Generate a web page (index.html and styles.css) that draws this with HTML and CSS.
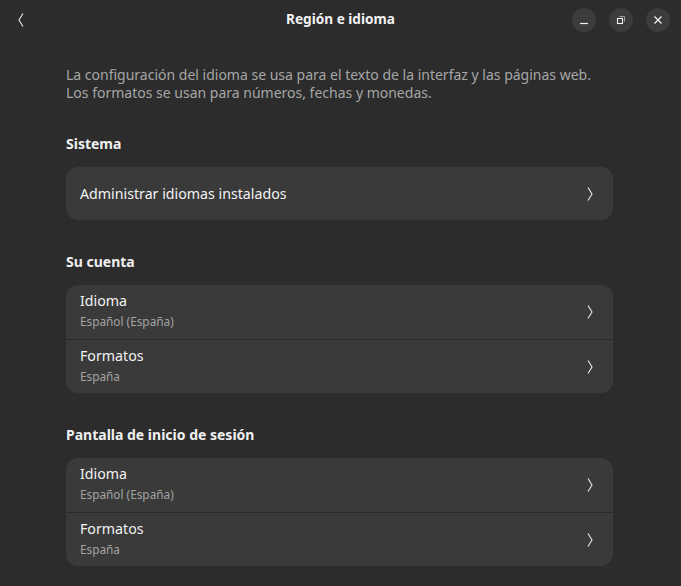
FILE: index.html
```html
<!DOCTYPE html>
<html lang="es">
<head>
<meta charset="utf-8">
<title>Región e idioma</title>
<link rel="stylesheet" href="styles.css">
</head>
<body>
<div class="window">
  <header class="headerbar">
    <div class="start">
      <button class="back" aria-label="Atrás">
        <svg width="10" height="16" viewBox="0 0 10 16"><path d="M7 1.5 L3 8 L7 14.5" fill="none" stroke="#e8e8e8" stroke-width="1.1"/></svg>
      </button>
    </div>
    <h1 class="title">Región e idioma</h1>
    <div class="controls">
      <span class="wbtn"><svg width="12" height="12" viewBox="0 0 12 12"><path d="M2 9.5 H10" stroke="#f0f0f0" stroke-width="1.2"/></svg></span>
      <span class="wbtn"><svg width="12" height="12" viewBox="0 0 12 12"><rect x="2.5" y="4.5" width="5" height="5" fill="none" stroke="#f0f0f0" stroke-width="1.1"/><path d="M4.5 2.5 H9.5 V7.5" fill="none" stroke="#a0a0a0" stroke-width="1"/></svg></span>
      <span class="wbtn"><svg width="12" height="12" viewBox="0 0 12 12"><path d="M2.5 2.5 L9.5 9.5 M9.5 2.5 L2.5 9.5" stroke="#f0f0f0" stroke-width="1.3"/></svg></span>
    </div>
  </header>
  <main class="content">
    <p class="desc">La configuración del idioma se usa para el texto de la interfaz y las páginas web.<br>Los formatos se usan para números, fechas y monedas.</p>

    <h2 class="section">Sistema</h2>
    <div class="card">
      <div class="row single">
        <span class="row-title">Administrar idiomas instalados</span>
        <svg class="chev" width="8" height="16" viewBox="0 0 8 16"><path d="M2 1.5 L6 8 L2 14.5" fill="none" stroke="#e8e8e8" stroke-width="1.1"/></svg>
      </div>
    </div>

    <h2 class="section">Su cuenta</h2>
    <div class="card">
      <div class="row">
        <div class="row-text"><span class="row-title">Idioma</span><span class="row-sub">Español (España)</span></div>
        <svg class="chev" width="8" height="16" viewBox="0 0 8 16"><path d="M2 1.5 L6 8 L2 14.5" fill="none" stroke="#e8e8e8" stroke-width="1.1"/></svg>
      </div>
      <div class="row">
        <div class="row-text"><span class="row-title">Formatos</span><span class="row-sub">España</span></div>
        <svg class="chev" width="8" height="16" viewBox="0 0 8 16"><path d="M2 1.5 L6 8 L2 14.5" fill="none" stroke="#e8e8e8" stroke-width="1.1"/></svg>
      </div>
    </div>

    <h2 class="section">Pantalla de inicio de sesión</h2>
    <div class="card">
      <div class="row">
        <div class="row-text"><span class="row-title">Idioma</span><span class="row-sub">Español (España)</span></div>
        <svg class="chev" width="8" height="16" viewBox="0 0 8 16"><path d="M2 1.5 L6 8 L2 14.5" fill="none" stroke="#e8e8e8" stroke-width="1.1"/></svg>
      </div>
      <div class="row">
        <div class="row-text"><span class="row-title">Formatos</span><span class="row-sub">España</span></div>
        <svg class="chev" width="8" height="16" viewBox="0 0 8 16"><path d="M2 1.5 L6 8 L2 14.5" fill="none" stroke="#e8e8e8" stroke-width="1.1"/></svg>
      </div>
    </div>
  </main>
</div>
</body>
</html>
```

FILE: styles.css
```css
* { box-sizing: border-box; }
html, body {
  margin: 0;
  padding: 0;
  background: #2c2c2c;
  color: #ffffff;
  font-family: "Noto Sans", "Open Sans", sans-serif;
}
.window {
  width: 681px;
  height: 586px;
  overflow: hidden;
  background: #2c2c2c;
}
.headerbar {
  height: 40px;
  display: grid;
  grid-template-columns: 1fr auto 1fr;
  align-items: center;
  padding: 0 11px 0 14px;
}
.start { display: flex; align-items: center; }
.back {
  background: none;
  border: none;
  padding: 0;
  width: 14px;
  height: 20px;
  display: flex;
  align-items: center;
  justify-content: center;
}
.title {
  margin: 0;
  text-align: center;
  font-size: 13.6px;
  line-height: 18px;
  font-weight: 700;
  color: #f2f2f2;
  padding-bottom: 2px;
  padding-right: 3px;
}
.controls {
  display: flex;
  gap: 13px;
  justify-content: flex-end;
}
.wbtn {
  width: 24px;
  height: 24px;
  border-radius: 50%;
  background: #3c3c3c;
  display: flex;
  align-items: center;
  justify-content: center;
}
.content {
  width: 547px;
  margin-left: 66px;
  padding-top: 26px;
}
.desc {
  margin: 0;
  font-size: 14px;
  line-height: 18px;
  color: #a6a6a6;
}
.section {
  margin: 33px 0 14px;
  font-size: 14px;
  line-height: 18px;
  font-weight: 700;
  color: #f0f0f0;
}
.card {
  background: #3a3a3a;
  border-radius: 12px;
  overflow: hidden;
}
.row {
  height: 54px;
  display: flex;
  align-items: center;
  justify-content: space-between;
  padding: 0 19px 0 14px;
}
.row + .row { border-top: 1px solid #2a2a2a; }
.row.single { height: 53px; }
.row-text {
  align-self: flex-start;
  display: flex;
  flex-direction: column;
  gap: 3px;
  padding-top: 7px;
}
.row-title {
  font-size: 14.2px;
  line-height: 18px;
  color: #f2f2f2;
}
.row-sub {
  font-size: 11.8px;
  line-height: 16px;
  color: #a3a3a3;
}
.chev { display: block; }
```
